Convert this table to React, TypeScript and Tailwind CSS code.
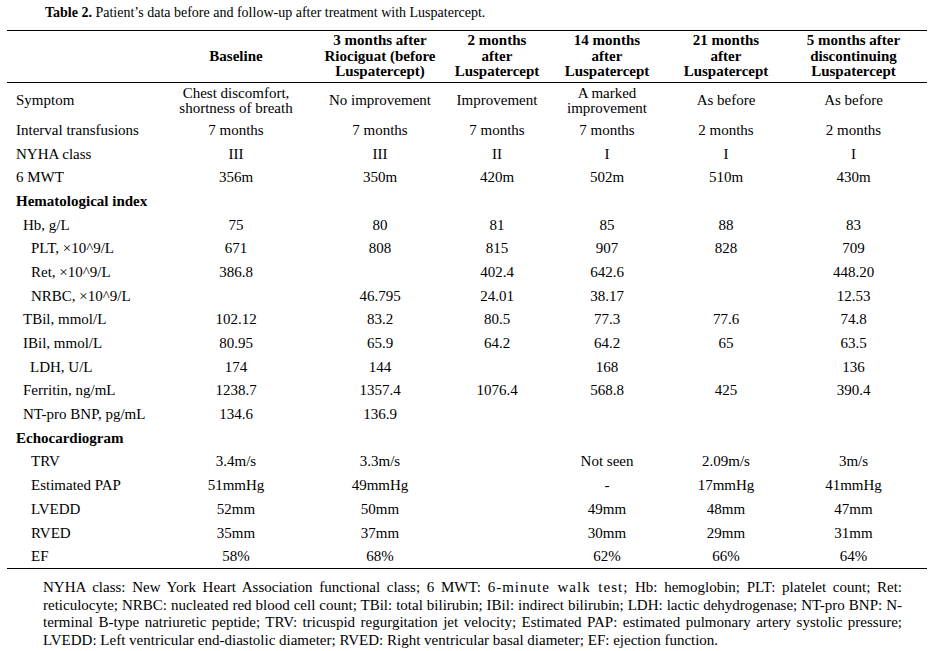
const serif = { fontFamily: '"Liberation Serif", "Times New Roman", serif' };

type Row = {
  label: string;
  indent: string;
  bold?: boolean;
  values?: string[];
};

const rows: Row[] = [
  { label: 'Interval transfusions', indent: 'pl-[9px]', values: ['7 months', '7 months', '7 months', '7 months', '2 months', '2 months'] },
  { label: 'NYHA class', indent: 'pl-[9px]', values: ['III', 'III', 'II', 'I', 'I', 'I'] },
  { label: '6 MWT', indent: 'pl-[9px]', values: ['356m', '350m', '420m', '502m', '510m', '430m'] },
  { label: 'Hematological index', indent: 'pl-[9px]', bold: true },
  { label: 'Hb, g/L', indent: 'pl-[16px]', values: ['75', '80', '81', '85', '88', '83'] },
  { label: 'PLT, ×10^9/L', indent: 'pl-[24px]', values: ['671', '808', '815', '907', '828', '709'] },
  { label: 'Ret, ×10^9/L', indent: 'pl-[24px]', values: ['386.8', '', '402.4', '642.6', '', '448.20'] },
  { label: 'NRBC, ×10^9/L', indent: 'pl-[24px]', values: ['', '46.795', '24.01', '38.17', '', '12.53'] },
  { label: 'TBil, mmol/L', indent: 'pl-[16px]', values: ['102.12', '83.2', '80.5', '77.3', '77.6', '74.8'] },
  { label: 'IBil, mmol/L', indent: 'pl-[16px]', values: ['80.95', '65.9', '64.2', '64.2', '65', '63.5'] },
  { label: 'LDH, U/L', indent: 'pl-[23px]', values: ['174', '144', '', '168', '', '136'] },
  { label: 'Ferritin, ng/mL', indent: 'pl-[16px]', values: ['1238.7', '1357.4', '1076.4', '568.8', '425', '390.4'] },
  { label: 'NT-pro BNP, pg/mL', indent: 'pl-[16px]', values: ['134.6', '136.9', '', '', '', ''] },
  { label: 'Echocardiogram', indent: 'pl-[9px]', bold: true },
  { label: 'TRV', indent: 'pl-[24px]', values: ['3.4m/s', '3.3m/s', '', 'Not seen', '2.09m/s', '3m/s'] },
  { label: 'Estimated PAP', indent: 'pl-[24px]', values: ['51mmHg', '49mmHg', '', '-', '17mmHg', '41mmHg'] },
  { label: 'LVEDD', indent: 'pl-[24px]', values: ['52mm', '50mm', '', '49mm', '48mm', '47mm'] },
  { label: 'RVED', indent: 'pl-[24px]', values: ['35mm', '37mm', '', '30mm', '29mm', '31mm'] },
  { label: 'EF', indent: 'pl-[24px]', values: ['58%', '68%', '', '62%', '66%', '64%'] },
];

export default function App() {
  return (
    <div className="w-[935px] h-[651px] bg-white text-black text-[15px] overflow-hidden" style={serif}>
      {/* caption */}
      <div className="h-[30px] pl-[45px] pt-[5px] text-[14px] leading-[16px]">
        <b>Table 2.</b> Patient’s data before and follow-up after treatment with Luspatercept.
      </div>

      <table className="ml-[7px] w-[920px] table-fixed border-collapse">
        <colgroup>
          <col className="w-[157px]" />
          <col className="w-[144px]" />
          <col className="w-[144px]" />
          <col className="w-[90px]" />
          <col className="w-[130px]" />
          <col className="w-[108px]" />
          <col className="w-[147px]" />
        </colgroup>
        <thead>
          <tr className="h-[52px] border-t border-b border-black font-bold leading-[15.5px] text-center">
            <th></th>
            <th className="align-middle">Baseline</th>
            <th className="align-middle whitespace-nowrap">3 months after<br />Riociguat (before<br />Luspatercept)</th>
            <th className="align-middle whitespace-nowrap">2 months<br />after<br />Luspatercept</th>
            <th className="align-middle whitespace-nowrap">14 months<br />after<br />Luspatercept</th>
            <th className="align-middle whitespace-nowrap">21 months<br />after<br />Luspatercept</th>
            <th className="align-middle whitespace-nowrap">5 months after<br />discontinuing<br />Luspatercept</th>
          </tr>
        </thead>
        <tbody>
          <tr className="h-[36px] leading-[15px] text-center">
            <td className="pl-[9px] text-left">Symptom</td>
            <td className="whitespace-nowrap">Chest discomfort,<br />shortness of breath</td>
            <td className="whitespace-nowrap">No improvement</td>
            <td className="whitespace-nowrap">Improvement</td>
            <td className="whitespace-nowrap">A marked<br />improvement</td>
            <td>As before</td>
            <td>As before</td>
          </tr>
          {rows.map((row, i) => (
            <tr key={row.label} className={`h-[23.7px] leading-[17px] text-center ${i === rows.length - 1 ? 'border-b border-black' : ''}`}>
              <td className={`${row.indent} text-left whitespace-nowrap ${row.bold ? 'font-bold' : ''}`}>{row.label}</td>
              {(row.values ?? ['', '', '', '', '', '']).map((v, j) => (
                <td key={j} className="whitespace-nowrap">{v}</td>
              ))}
            </tr>
          ))}
        </tbody>
      </table>

      {/* footnote */}
      <div className="ml-[43px] mt-[10px] w-[859px] leading-[17.5px]">
        <div className="text-justify [text-align-last:justify]">
          NYHA class: New York Heart Association functional class; 6 MWT: <span className="tracking-[1px]">6-minute walk test;</span> Hb: hemoglobin; PLT: platelet count; Ret:
        </div>
        <div className="text-justify [text-align-last:justify]">
          reticulocyte; NRBC: nucleated red blood cell count; TBil: total bilirubin; IBil: indirect bilirubin; LDH: lactic dehydrogenase; NT-pro BNP: N-
        </div>
        <div className="text-justify [text-align-last:justify]">
          terminal B-type natriuretic peptide; TRV: tricuspid regurgitation jet velocity; Estimated PAP: estimated pulmonary artery systolic pressure;
        </div>
        <div>LVEDD: Left ventricular end-diastolic diameter; RVED: Right ventricular basal diameter; EF: ejection function.</div>
      </div>
    </div>
  );
}
